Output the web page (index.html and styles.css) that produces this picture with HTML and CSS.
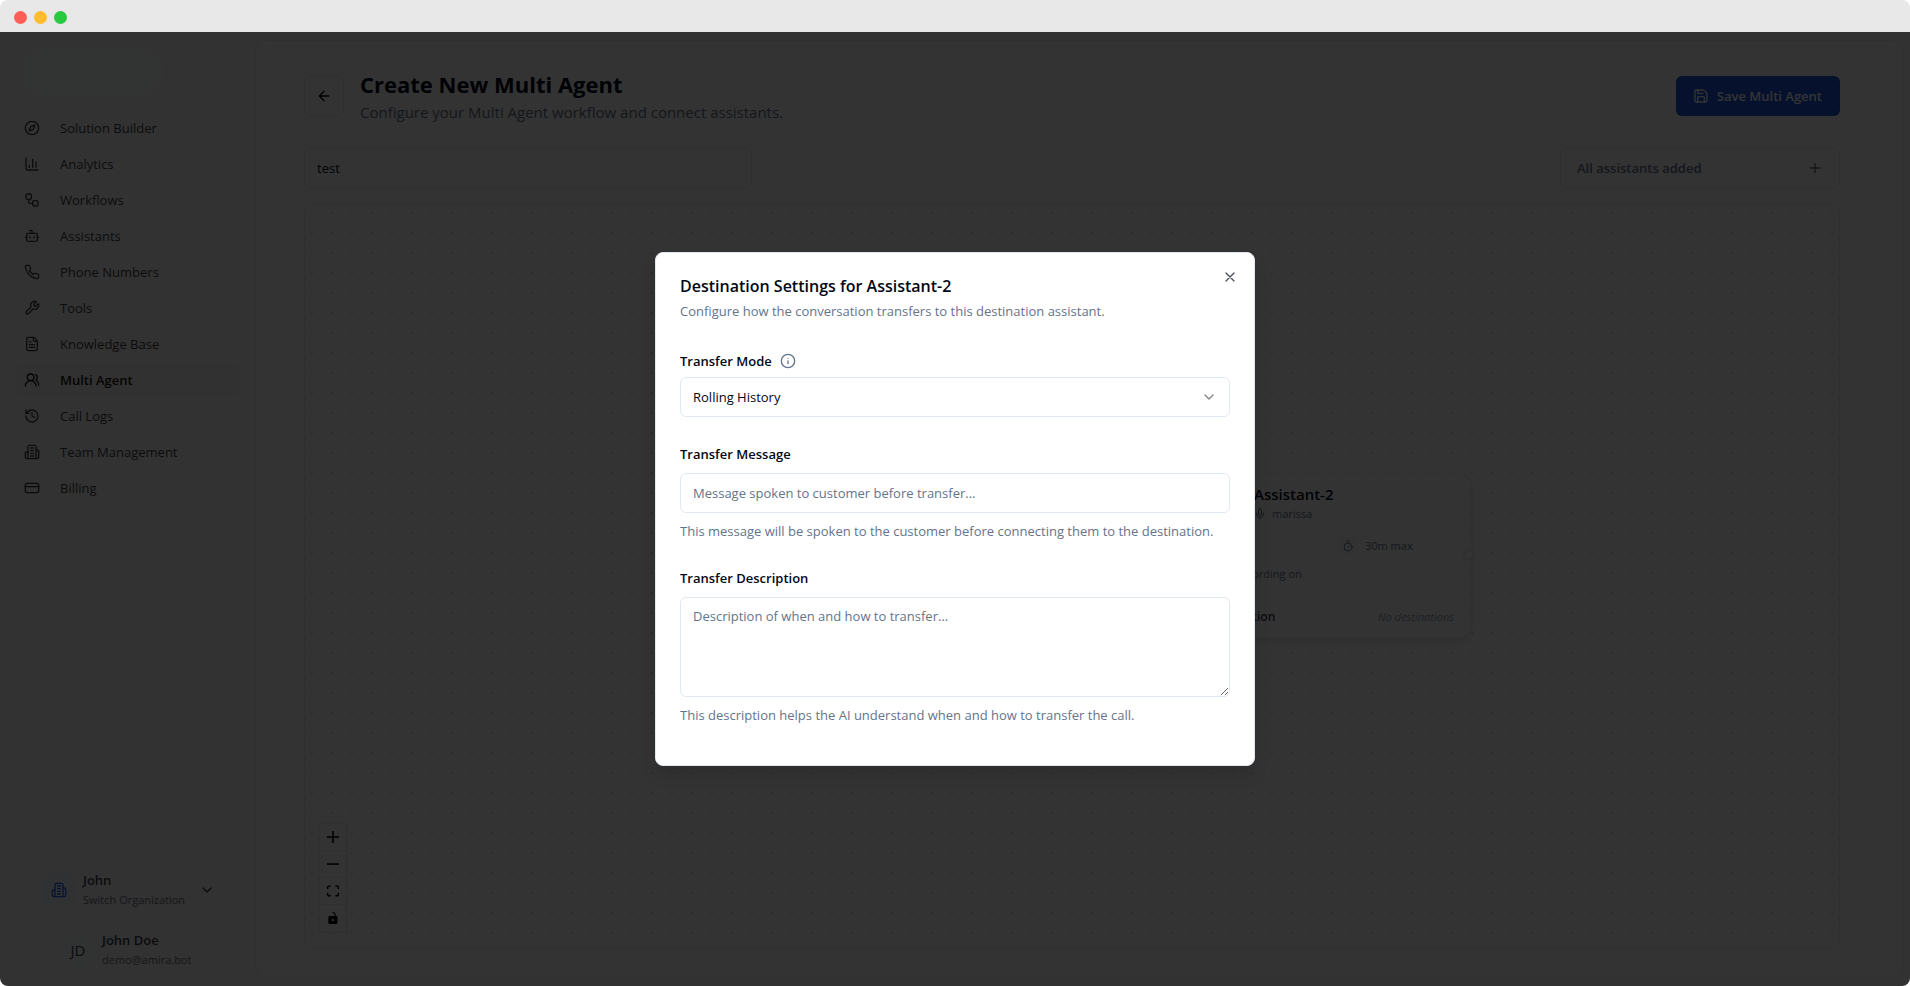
FILE: index.html
```html
<!DOCTYPE html>
<html lang="en">
<head>
    <meta charset="UTF-8">
    <meta name="viewport" content="width=device-width, initial-scale=1.0">
    <title>Create New Multi Agent</title>
    <link rel="stylesheet" href="styles.css">
</head>
<body>
    <div class="window">
        <!-- Window bar -->
        <div class="titlebar">
            <span class="light red"></span>
            <span class="light yellow"></span>
            <span class="light green"></span>
        </div>

        <div class="app">
            <!-- Sidebar -->
            <aside class="sidebar">
                <div class="logo"></div>
                <nav class="nav">
                    <a href="#"><svg class="icon" viewBox="0 0 24 24"><circle cx="12" cy="12" r="10"/><path d="m16.24 7.76-1.8 5.41a2 2 0 0 1-1.27 1.27L7.76 16.24l1.8-5.41a2 2 0 0 1 1.27-1.27z"/></svg>Solution Builder</a>
                    <a href="#"><svg class="icon" viewBox="0 0 24 24"><path d="M3 3v16a2 2 0 0 0 2 2h16M13 17V5M18 17V9M8 17v-3"/></svg>Analytics</a>
                    <a href="#"><svg class="icon" viewBox="0 0 24 24"><rect x="3" y="3" width="8" height="8" rx="2"/><path d="M7 11v4a2 2 0 0 0 2 2h4"/><rect x="13" y="13" width="8" height="8" rx="2"/></svg>Workflows</a>
                    <a href="#"><svg class="icon" viewBox="0 0 24 24"><path d="M12 8V4H8"/><rect x="4" y="8" width="16" height="12" rx="2"/><path d="M2 14h2M20 14h2M15 13v2M9 13v2"/></svg>Assistants</a>
                    <a href="#"><svg class="icon" viewBox="0 0 24 24"><path d="M22 16.92v3a2 2 0 0 1-2.18 2 19.79 19.79 0 0 1-8.63-3.07 19.5 19.5 0 0 1-6-6 19.79 19.79 0 0 1-3.07-8.67A2 2 0 0 1 4.11 2h3a2 2 0 0 1 2 1.72 12.84 12.84 0 0 0 .7 2.81 2 2 0 0 1-.45 2.11L8.09 9.91a16 16 0 0 0 6 6l1.27-1.27a2 2 0 0 1 2.11-.45 12.84 12.84 0 0 0 2.81.7A2 2 0 0 1 22 16.92z"/></svg>Phone Numbers</a>
                    <a href="#"><svg class="icon" viewBox="0 0 24 24"><path d="M14.7 6.3a1 1 0 0 0 0 1.4l1.6 1.6a1 1 0 0 0 1.4 0l3.77-3.77a6 6 0 0 1-7.94 7.94l-6.91 6.91a2.12 2.12 0 0 1-3-3l6.91-6.91a6 6 0 0 1 7.94-7.94l-3.76 3.76z"/></svg>Tools</a>
                    <a href="#"><svg class="icon" viewBox="0 0 24 24"><path d="M15 2H6a2 2 0 0 0-2 2v16a2 2 0 0 0 2 2h12a2 2 0 0 0 2-2V7z"/><path d="M14 2v4a2 2 0 0 0 2 2h4M10 9H8M16 13H8M16 17H8"/></svg>Knowledge Base</a>
                    <a href="#" class="active"><svg class="icon" viewBox="0 0 24 24"><path d="M18 21a8 8 0 0 0-16 0"/><circle cx="10" cy="8" r="5"/><path d="M22 20c0-3.37-2-6.5-4-8a5 5 0 0 0-.45-8.3"/></svg>Multi Agent</a>
                    <a href="#"><svg class="icon" viewBox="0 0 24 24"><path d="M3 12a9 9 0 1 0 9-9 9.75 9.75 0 0 0-6.74 2.74L3 8"/><path d="M3 3v5h5M12 7v5l4 2"/></svg>Call Logs</a>
                    <a href="#"><svg class="icon" viewBox="0 0 24 24"><path d="M6 22V4a2 2 0 0 1 2-2h8a2 2 0 0 1 2 2v18z"/><path d="M6 12H4a2 2 0 0 0-2 2v6a2 2 0 0 0 2 2h2M18 9h2a2 2 0 0 1 2 2v9a2 2 0 0 1-2 2h-2M10 6h4M10 10h4M10 14h4M10 18h4"/></svg>Team Management</a>
                    <a href="#"><svg class="icon" viewBox="0 0 24 24"><rect x="2" y="5" width="20" height="14" rx="2"/><path d="M2 10h20"/></svg>Billing</a>
                </nav>

                <div class="account">
                    <button type="button" class="org">
                        <span class="org-icon"><svg class="icon" viewBox="0 0 24 24"><path d="M6 22V4a2 2 0 0 1 2-2h8a2 2 0 0 1 2 2v18z"/><path d="M6 12H4a2 2 0 0 0-2 2v6a2 2 0 0 0 2 2h2M18 9h2a2 2 0 0 1 2 2v9a2 2 0 0 1-2 2h-2M10 6h4M10 10h4M10 14h4M10 18h4"/></svg></span>
                        <span class="who"><strong>John</strong><small>Switch Organization</small></span>
                        <svg class="icon" viewBox="0 0 24 24"><path d="m6 9 6 6 6-6"/></svg>
                    </button>
                    <button type="button" class="user">
                        <span class="avatar">JD</span>
                        <span class="who"><strong>John Doe</strong><small>demo@amira.bot</small></span>
                    </button>
                </div>
            </aside>

            <!-- Main content -->
            <main class="main">
                <header class="header">
                    <button type="button" class="back" aria-label="Back"><svg class="icon" viewBox="0 0 24 24"><path d="m12 19-7-7 7-7M19 12H5"/></svg></button>
                    <div class="heading">
                        <h1>Create New Multi Agent</h1>
                        <p>Configure your Multi Agent workflow and connect assistants.</p>
                    </div>
                    <button type="button" class="save"><svg class="icon" viewBox="0 0 24 24"><path d="M15.2 3a2 2 0 0 1 1.4.6l3.8 3.8a2 2 0 0 1 .6 1.4V19a2 2 0 0 1-2 2H5a2 2 0 0 1-2-2V5a2 2 0 0 1 2-2z"/><path d="M17 21v-7a1 1 0 0 0-1-1H8a1 1 0 0 0-1 1v7M7 3v4a1 1 0 0 0 1 1h7"/></svg>Save Multi Agent</button>
                </header>

                <div class="toolbar">
                    <input type="text" class="name-input" value="test" aria-label="Multi agent name">
                    <button type="button" class="add">All assistants added<svg class="icon" viewBox="0 0 24 24"><path d="M5 12h14M12 5v14"/></svg></button>
                </div>

                <div class="canvas">
                    <!-- Assistant node -->
                    <div class="node">
                        <div class="node-head">
                            <span class="node-icon"></span>
                            <div>
                                <h3>Assistant-2</h3>
                                <p><svg class="icon" viewBox="0 0 24 24"><path d="M12 2a3 3 0 0 0-3 3v7a3 3 0 0 0 6 0V5a3 3 0 0 0-3-3zM19 10v2a7 7 0 0 1-14 0v-2M12 19v3"/></svg>marissa</p>
                            </div>
                        </div>
                        <div class="node-info">
                            <span class="time"><i><svg class="icon" viewBox="0 0 24 24"><path d="M10 2h4M12 14l3-3"/><circle cx="12" cy="14" r="8"/></svg></i>30m max</span>
                            <span class="rec"><i></i>Recording on</span>
                        </div>
                        <div class="node-foot"><strong>Destination</strong><em>No destinations</em></div>
                        <span class="handle"></span>
                    </div>

                    <!-- Zoom controls -->
                    <div class="controls">
                        <button type="button" aria-label="Zoom in"><svg viewBox="0 0 32 32"><path d="M32 18.133H18.133V32h-4.266V18.133H0v-4.266h13.867V0h4.266v13.867H32z"/></svg></button>
                        <button type="button" aria-label="Zoom out"><svg viewBox="0 0 32 32"><path d="M0 14h32v4.200H0z"/></svg></button>
                        <button type="button" aria-label="Fit view"><svg viewBox="0 0 32 30"><path d="M3.692 4.63c0-.53.4-.938.939-.938h5.215V0H4.708C2.13 0 0 2.054 0 4.63v5.216h3.692V4.631zM27.354 0h-5.2v3.692h5.17c.53 0 .984.4.984.939v5.215H32V4.631A4.624 4.624 0 0027.354 0zm.954 24.83c0 .532-.4.94-.939.94h-5.215v3.768h5.215c2.577 0 4.631-2.13 4.631-4.707v-5.139h-3.692v5.139zm-23.677.94c-.531 0-.939-.4-.939-.94v-5.138H0v5.139c0 2.577 2.13 4.707 4.708 4.707h5.138V25.77H4.631z"/></svg></button>
                        <button type="button" aria-label="Toggle lock"><svg viewBox="0 0 25 32"><path d="M21.333 10.667H19.81V7.619C19.81 3.429 16.38 0 12.19 0c-4.114 1.828-1.37 2.133.305 2.438 1.676.305 4.42 2.59 4.42 5.181v3.048H3.047A3.056 3.056 0 000 13.714v15.238A3.056 3.056 0 003.048 32h18.285a3.056 3.056 0 003.048-3.048V13.714a3.056 3.056 0 00-3.048-3.047zM12.19 24.533a3.056 3.056 0 01-3.047-3.047 3.056 3.056 0 013.047-3.048 3.056 3.056 0 013.048 3.048 3.056 3.056 0 01-3.048 3.047z"/></svg></button>
                    </div>
                </div>
            </main>

            <!-- Destination settings dialog -->
            <div class="overlay">
                <form class="modal" role="dialog" aria-labelledby="modal-title">
                    <button type="button" class="close" aria-label="Close"><svg class="icon" viewBox="0 0 24 24"><path d="M18 6 6 18M6 6l12 12"/></svg></button>
                    <h2 id="modal-title">Destination Settings for Assistant-2</h2>
                    <p class="intro">Configure how the conversation transfers to this destination assistant.</p>

                    <div class="field field-mode">
                        <div class="label-row">
                            <label for="mode">Transfer Mode</label>
                            <svg class="icon" viewBox="0 0 24 24"><circle cx="12" cy="12" r="10"/><path d="M12 16v-4M12 8h.01"/></svg>
                        </div>
                        <div class="select-wrap">
                            <select id="mode">
                                <option>Rolling History</option>
                            </select>
                            <svg class="icon" viewBox="0 0 24 24"><path d="m6 9 6 6 6-6"/></svg>
                        </div>
                    </div>

                    <div class="field">
                        <label for="message">Transfer Message</label>
                        <input type="text" id="message" placeholder="Message spoken to customer before transfer...">
                        <p class="help">This message will be spoken to the customer before connecting them to the destination.</p>
                    </div>

                    <div class="field">
                        <label for="description">Transfer Description</label>
                        <textarea id="description" placeholder="Description of when and how to transfer..."></textarea>
                        <p class="help">This description helps the AI understand when and how to transfer the call.</p>
                    </div>
                </form>
            </div>
        </div>
    </div>
</body>
</html>
```

FILE: styles.css
```css
* {
    box-sizing: border-box;
}

body {
    margin: 0;
    background-color: white;
    color: #020817;
    font-family: "Open Sans", "Noto Sans", sans-serif;
    font-size: 13px;
    line-height: 20px;
}

h1, h2, h3, p {
    margin: 0;
}

button, input, select, textarea {
    font: inherit;
    color: inherit;
}

button {
    padding: 0;
    background: none;
    border: none;
    cursor: pointer;
}

.icon {
    width: 16px;
    height: 16px;
    flex-shrink: 0;
    fill: none;
    stroke: currentColor;
    stroke-width: 2;
    stroke-linecap: round;
    stroke-linejoin: round;
}

/* Window */
.window {
    display: flex;
    flex-direction: column;
    height: 100vh;
    border-radius: 8px;
    overflow: hidden;
}

.titlebar {
    display: flex;
    align-items: center;
    gap: 7px;
    height: 32px;
    flex-shrink: 0;
    padding: 2px 14px 0;
    background-color: #e8e8e8;
}

.light {
    width: 13px;
    height: 13px;
    border-radius: 50%;
}

.red { background-color: #ff5f57; }
.yellow { background-color: #febc2e; }
.green { background-color: #28c840; }

.app {
    position: relative;
    display: flex;
    flex: 1;
    min-height: 0;
    background-color: #fafafa;
}

/* Sidebar */
.sidebar {
    display: flex;
    flex-direction: column;
    width: 255px;
    flex-shrink: 0;
    padding: 16px 15px 16px 16px;
    color: #3f3f46;
}

.logo {
    width: 144px;
    height: 48px;
    margin: 0 0 16px 4px;
    border-radius: 24px;
    background-color: #f7fdfc;
    filter: blur(6px);
}

.nav {
    display: flex;
    flex-direction: column;
    gap: 4px;
}

.nav a {
    display: flex;
    align-items: center;
    gap: 20px;
    height: 32px;
    padding: 0 8px;
    border-radius: 6px;
    color: inherit;
    text-decoration: none;
}

.nav .active {
    background-color: #f4f4f5;
    color: #18181b;
    font-weight: 600;
}

.account {
    display: flex;
    flex-direction: column;
    gap: 20px;
    margin-top: auto;
}

.org,
.user {
    display: flex;
    align-items: center;
    gap: 8px;
    padding-left: 27px;
    text-align: left;
}

.org .who {
    min-width: 108px;
}

.user {
    padding-left: 46px;
}

.org-icon,
.avatar {
    display: flex;
    align-items: center;
    justify-content: center;
    width: 32px;
    height: 32px;
    border-radius: 8px;
    background-color: #eff4ff;
    color: #2563eb;
}

.avatar {
    border-radius: 50%;
    background-color: #f4f7fb;
    color: #3f3f46;
    font-size: 15px;
}

.who strong,
.who small {
    display: block;
}

.who strong {
    font-weight: 600;
}

.who small {
    color: #71717a;
    font-size: 11px;
}

/* Main */
.main {
    display: flex;
    flex-direction: column;
    flex: 1;
    min-width: 0;
    margin: 8px 7px 8px 0;
    padding: 27px 62px 29px 48px;
    border: 1px solid #ececee;
    border-radius: 12px;
    background-color: white;
}

.header {
    display: flex;
    align-items: center;
    gap: 16px;
    margin-bottom: 24px;
}

.back {
    display: flex;
    align-items: center;
    justify-content: center;
    width: 40px;
    height: 40px;
    border: 1px solid #e2e8f0;
    border-radius: 6px;
}

.heading {
    flex: 1;
}

h1 {
    font-size: 22px;
    font-weight: 700;
    line-height: 32px;
}

.heading p {
    color: #64748b;
    font-size: 15px;
    line-height: 24px;
}

.save {
    display: flex;
    align-items: center;
    gap: 8px;
    height: 40px;
    padding: 0 18px 0 17px;
    border-radius: 6px;
    background-color: #1a58e0;
    color: white;
    font-weight: 600;
}

.toolbar {
    display: flex;
    justify-content: space-between;
    margin-bottom: 16px;
}

.name-input {
    width: 448px;
    height: 40px;
    padding: 0 12px;
    border: 1px solid #e2e8f0;
    border-radius: 6px;
    background-color: white;
}

.add {
    display: flex;
    align-items: center;
    justify-content: space-between;
    width: 280px;
    height: 40px;
    padding: 0 16px;
    border: 1px solid #e2e8f0;
    border-radius: 6px;
    color: #64748b;
    font-weight: 600;
}

.canvas {
    position: relative;
    flex: 1;
    border: 1px solid #e2e8f0;
    border-radius: 8px;
    background-image: radial-gradient(circle, #dddde1 1px, transparent 1px);
    background-size: 20px 20px;
    background-position: -3px -2px;
}

/* Node on the canvas */
.node {
    position: absolute;
    left: 886px;
    top: 268px;
    width: 280px;
    padding: 8px 16px;
    border: 1px solid #f1f5f9;
    border-radius: 12px;
    background-color: white;
    box-shadow: 0 4px 8px rgba(0, 0, 0, 0.1);
    color: #64748b;
    font-size: 11px;
}

.node-head {
    display: flex;
    gap: 6px;
    margin-bottom: 14px;
}

.node-icon {
    width: 40px;
    height: 40px;
    border-radius: 8px;
    background-color: #eff4ff;
}

.node h3 {
    color: #020817;
    font-size: 15px;
    font-weight: 600;
    line-height: 24px;
}

.node p {
    display: flex;
    align-items: center;
    gap: 6px;
    height: 16px;
}

.node .icon {
    width: 12px;
    height: 12px;
}

.node-info {
    display: grid;
    grid-template-columns: 1fr 1fr;
    gap: 8px 16px;
    padding-bottom: 10px;
    border-bottom: 1px solid #f1f5f9;
}

.node-info span {
    display: flex;
    align-items: center;
    gap: 8px;
}

.node-info i {
    display: flex;
    align-items: center;
    justify-content: center;
    width: 18px;
    height: 18px;
    border-radius: 4px;
    background-color: #f8fafc;
}

.node-info .time {
    grid-column: 2;
}

.node-foot {
    display: flex;
    justify-content: space-between;
    padding: 12px 0 2px;
}

.node-foot strong {
    color: #334155;
    font-size: 12px;
    font-weight: 600;
}

.node-foot em {
    color: #94a3b8;
}

.handle {
    position: absolute;
    top: 75px;
    right: -5px;
    width: 12px;
    height: 12px;
    border: 2px solid #dfe7ec;
    border-radius: 50%;
    background-color: white;
}

.controls {
    position: absolute;
    left: 14px;
    bottom: 14px;
    display: flex;
    flex-direction: column;
    border: 1px solid #eeeeee;
    box-shadow: 0 0 2px 1px rgba(0, 0, 0, 0.04);
}

.controls button {
    display: flex;
    align-items: center;
    justify-content: center;
    width: 26px;
    height: 27px;
    border-bottom: 1px solid #eeeeee;
    background-color: white;
}

.controls svg {
    width: 12px;
    height: 12px;
}

/* Dialog */
.overlay {
    position: absolute;
    inset: 0;
    display: flex;
    align-items: center;
    justify-content: center;
    background-color: rgba(0, 0, 0, 0.8);
}

.modal {
    position: relative;
    width: 600px;
    padding: 24px 24px 40px;
    border: 1px solid #e2e8f0;
    border-radius: 8px;
    background-color: white;
    box-shadow: 0 10px 15px rgba(0, 0, 0, 0.1);
}

.close {
    position: absolute;
    top: 16px;
    right: 16px;
    display: flex;
    color: #4a4f5b;
}

.modal h2 {
    margin-bottom: 6px;
    font-size: 16px;
    font-weight: 600;
    line-height: 18px;
}

.intro,
.help {
    color: #64748b;
}

.field {
    display: flex;
    flex-direction: column;
    margin-top: 27px;
}

.field-mode {
    margin-top: 30px;
}

.field label {
    margin-bottom: 9px;
    font-weight: 600;
}

.label-row {
    display: flex;
    align-items: center;
    gap: 8px;
    margin-bottom: 6px;
    color: #64748b;
}

.label-row label {
    margin: 0;
    color: #020817;
}

.field select,
.field input,
.field textarea {
    width: 100%;
    height: 40px;
    padding: 0 12px;
    border: 1px solid #e2e8f0;
    border-radius: 6px;
    background-color: white;
}

.field textarea {
    display: block;
    height: 100px;
    padding: 8px 12px;
    resize: vertical;
}

.field select {
    appearance: none;
}

.field ::placeholder {
    color: #64748b;
    opacity: 1;
}

.select-wrap {
    position: relative;
}

.select-wrap .icon {
    position: absolute;
    top: 12px;
    right: 13px;
    color: #81848b;
    pointer-events: none;
}

.help {
    margin-top: 8px;
}
```
